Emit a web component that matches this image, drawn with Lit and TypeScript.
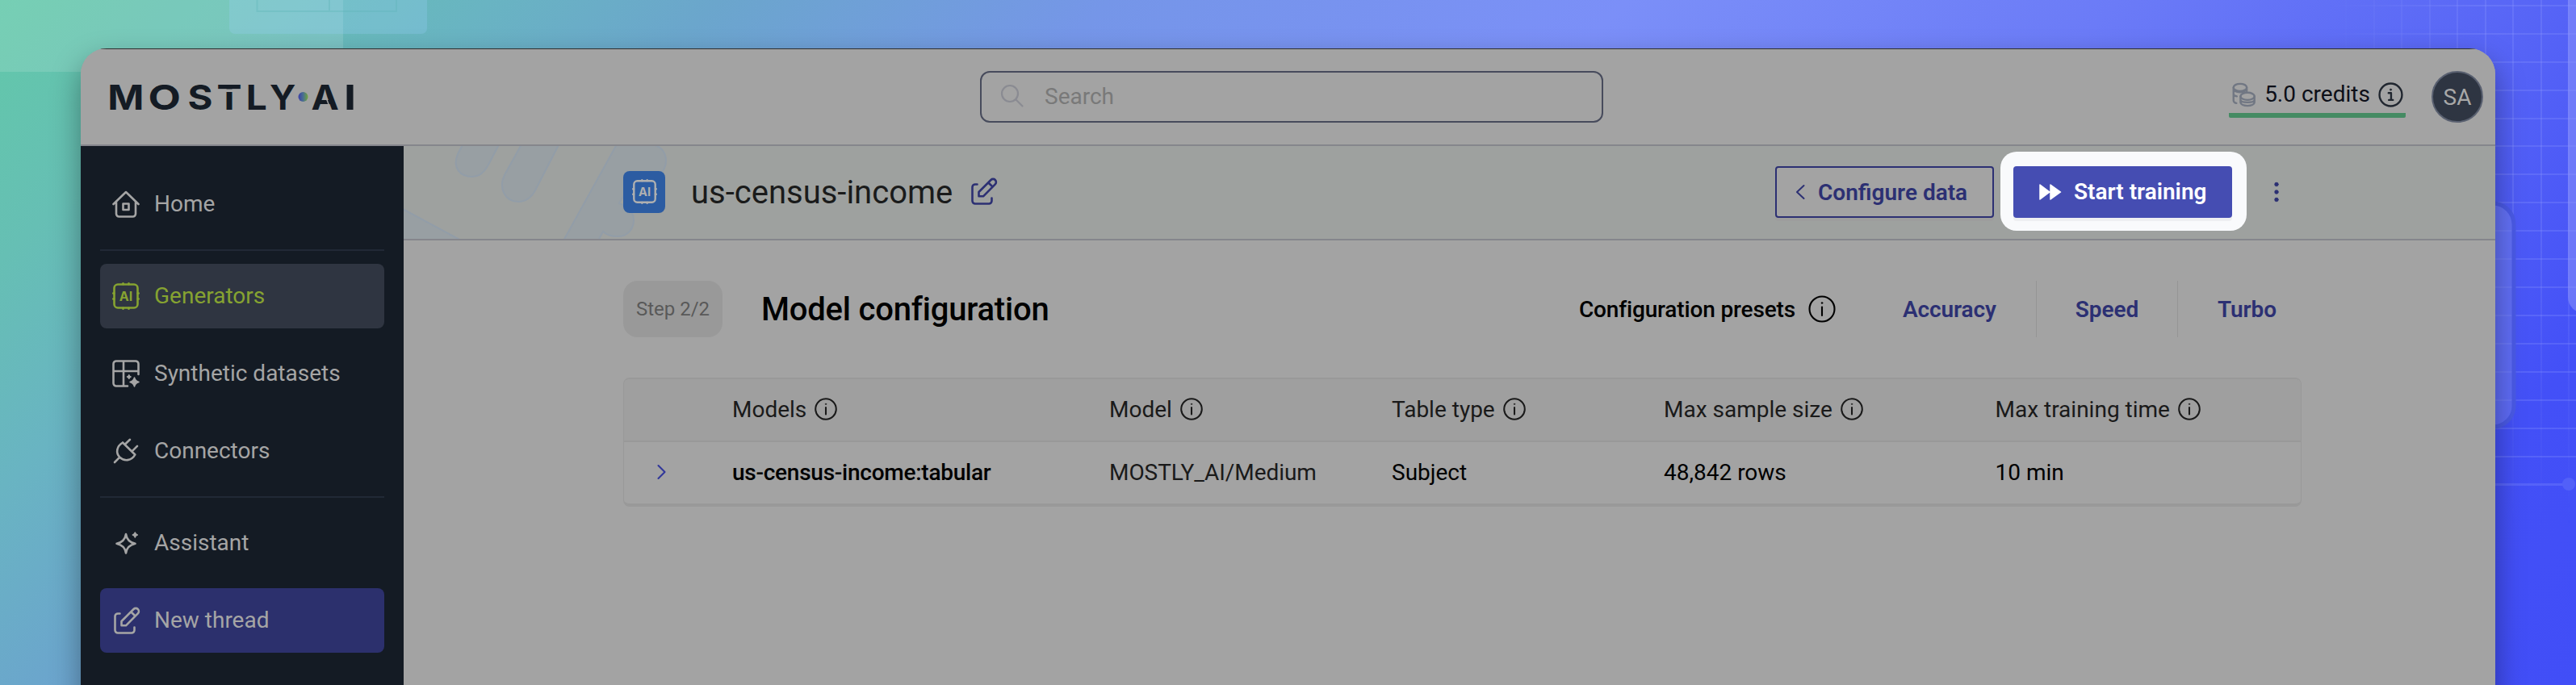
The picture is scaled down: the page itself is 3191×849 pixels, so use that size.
import { LitElement, html, css, svg } from "lit";
import { customElement, property } from "lit/decorators.js";

const icons: Record<string, any> = {
  home: svg`<path d="M1.5 17 17 2l15.500 15M5 14.500V29a3.500 3.500 0 0 0 3.500 3.500h17A3.500 3.500 0 0 0 29 29V14.500"/><rect x="13.500" y="16.500" width="7" height="7.500"/>`,
  chip: svg`<rect x="2.500" y="2.500" width="29" height="29" rx="4.500"/><path d="M13.500 1.300v1M20.500 1.300v1M13.500 31.700v1M20.500 31.700v1M1.300 13.500h1M1.300 20.500h1M31.700 13.500h1M31.700 20.500h1"/><text x="17" y="23" text-anchor="middle" class="chiptext">AI</text>`,
  dataset: svg`<path d="M32.500 18V5A3.500 3.500 0 0 0 29 1.500H5A3.500 3.500 0 0 0 1.500 5v24A3.500 3.500 0 0 0 5 32.500h14M14 1.500v31M1.500 14h31"/><path class="solid" d="M27.500 22q1.200 4.300 5.500 5.500-4.300 1.200-5.500 5.500-1.200-4.300-5.500-5.500 4.300-1.200 5.500-5.500zM20.800 18.700q.5 2 2.300 2.300-1.800.5-2.300 2.300-.5-1.800-2.300-2.300 1.800-.5 2.300-2.300z"/>`,
  plug: svg`<path d="M13 6.500l15.300 15M22 2.800l-6.200 6M31 10.800l-6 6M13 6.500C5.500 11 4 19 9.300 24.700 14.500 30 24 29.500 28.300 21.500M3 31l6.300-6.300"/>`,
  spark: svg`<path d="M17 6c1 6.500 4.800 10.500 11.500 11.800C21.800 19.200 18 23 17 29.500 16 23 12.200 19.200 5.500 17.800 12.200 16.500 16 12.500 17 6z"/><path class="solid" d="M28.300 4q.6 2.400 3 3-2.400.6-3 3-.6-2.400-3-3 2.400-.6 3-3z"/>`,
  edit: svg`<path d="M9.500 8.500H7A3.500 3.500 0 0 0 3.500 12v17A3.500 3.500 0 0 0 7 32.500h17a3.500 3.500 0 0 0 3.500-3.500v-3.500M11.500 18 26.500 3a3.700 3.700 0 0 1 5.300 5.300L17 23.300h-5.500zM23.500 6.500l5 5"/>`,
  search: svg`<circle cx="13" cy="13" r="10"/><path d="M20.500 20.500l8 8"/>`,
  coins: svg`<ellipse cx="12" cy="7" rx="9" ry="5"/><path d="M3 7v18c0 1.500 2 3 4 3.300M21 7v5M3 16c0 1.500 2 2.700 4.500 3M5 12c4 2 10 2 14-.5"/><ellipse cx="22" cy="19" rx="9.500" ry="5"/><path d="M12.500 19v8c0 6.500 19 6.500 19 0v-8M12.500 23.500c0 5 19 5 19 0"/>`,
  info: svg`<circle cx="17" cy="17" r="15.500"/><path d="M17 14.500V25"/><circle class="solid dot" cx="17" cy="9.500" r="1"/>`,
  infoSerif: svg`<circle cx="17" cy="17" r="15.300"/><path d="M14 14.500h3.500V24M14.500 24h5.500"/><circle class="solid dot" cx="17" cy="10" r="1.300"/>`,
  left: svg`<path d="M21.500 9l-8.500 8 8.500 8"/>`,
  right: svg`<path d="M12.500 9l8 8-8 8"/>`,
  forward: svg`<path class="solid" d="M4 8l12 9L4 26zM17 8l12.500 9L17 26z"/>`,
  kebab: svg`<circle class="solid dot" cx="17" cy="7.500" r="2.400"/><circle class="solid dot" cx="17" cy="17" r="2.400"/><circle class="solid dot" cx="17" cy="26.500" r="2.400"/>`,
};

@customElement("ui-icon")
class UiIcon extends LitElement {
  @property() name = "home";
  static styles = css`
    :host { display: block; flex: none; width: 34px; height: 34px; }
    svg { display: block; width: 100%; height: 100%; overflow: visible; fill: none; stroke: currentColor; stroke-width: var(--stroke, 2.6); stroke-linecap: round; stroke-linejoin: round; }
    .solid { fill: currentColor; stroke-width: 1.5; }
    .dot { stroke-width: 0.5; }
    .chiptext { font: 700 16px Inter, sans-serif; fill: currentColor; stroke: none; }
  `;
  render() {
    return html`<svg viewBox="0 0 34 34">${icons[this.name]}</svg>`;
  }
}

@customElement("app-backdrop")
class AppBackdrop extends LitElement {
  static styles = css`
    :host { position: absolute; inset: 0; background: linear-gradient(135deg, #62c8a9 0%, #66bfb4 8%, #69b4c2 15%, #6ba6cc 22%, #7596e8 34%, #7b8ff8 50%, #6b7bf7 65%, #5765f6 78%, #4350f7 90%, #414ef7 100%); }
    svg { display: block; width: 3191px; height: 849px; }
  `;
  render() {
    const xs = [2906, 2941, 2975, 3010, 3044, 3079, 3113, 3148, 3182];
    const ys = [7, 42, 77, 112, 147, 181, 216, 251, 286, 321, 356, 391, 426, 461, 496, 531, 566];
    return html`<svg viewBox="0 0 3191 849">
      <defs>
        <linearGradient id="fx" x1="0" x2="1"><stop offset="0" stop-color="#000" /><stop offset="0.6" stop-color="#fff" /></linearGradient>
        <linearGradient id="fy" x1="0" x2="0" y1="0" y2="1"><stop offset="0" stop-color="#fff" /><stop offset="0.4" stop-color="#fff" /><stop offset="1" stop-color="#fff" stop-opacity="0" /></linearGradient>
        <mask id="m" maskUnits="userSpaceOnUse" x="2880" y="0" width="311" height="849"><rect x="2880" y="0" width="311" height="849" fill="url(#fx)" /></mask>
        <mask id="n" maskUnits="userSpaceOnUse" x="2880" y="0" width="311" height="660"><rect x="2880" y="0" width="311" height="650" fill="url(#fy)" /></mask>
      </defs>
      <rect width="425" height="89" fill="#fff" fill-opacity=".13" />
      <rect x="284" y="-20" width="245" height="62" rx="7" fill="#9fd0ff" fill-opacity=".24" />
      <path d="M318.500 0V14H491V0M408 0V14" fill="none" stroke="#5fb5b8" stroke-opacity=".35" stroke-width="2" />
      <g mask="url(#m)" stroke="#8f9bff" stroke-opacity=".25" stroke-width="2">
        <g mask="url(#n)">${xs.map((x) => svg`<path d="M${x} 0V650" />`)}</g>
        ${ys.map((y) => svg`<path d="M2880 ${y}H3191" />`)}
        <path d="M2880 600.500H3182" stroke-width="3" />
      </g>
      <circle cx="3182" cy="600" r="8" fill="#5260f8" />
      <rect x="3181" y="-20" width="60" height="408" rx="20" fill="#8a94fb" fill-opacity=".55" />
      <rect x="3040" y="252" width="74" height="277" rx="26" fill="#7886f5" fill-opacity=".5" stroke="#4a5ae6" stroke-width="5" />
    </svg>`;
  }
}

// letter, ink left edge, horizontal stretch, left side bearing
const wordmark: [string, number, number, number][] = [
  ["M", 0, 1.127, 2.5],
  ["O", 50, 1.22, 2],
  ["S", 98, 1.1, 1.3],
  ["T", 134, 1.08, 1.5],
  ["L", 172, 1.07, 3],
  ["Y", 199, 1.03, 1],
  ["A", 251, 1.07, 1.5],
  ["I", 294, 1.25, 3.2],
];

@customElement("app-topbar")
class AppTopbar extends LitElement {
  static styles = css`
    :host { display: flex; align-items: center; box-sizing: border-box; height: 121px; padding: 1px 15px 0 36px; border-bottom: 2px solid #85868c; background: linear-gradient(#303030, #303030) center top / calc(100% - 48px) 1px no-repeat #a3a3a3; border-radius: 32px 32px 0 0; }
    .logo { display: block; width: 304px; height: 34px; overflow: visible; fill: #141b24; font: 700 43px Inter, sans-serif; }
    .search { display: flex; align-items: center; box-sizing: border-box; width: 772px; height: 64px; margin-left: 774px; padding-left: 22px; border: 2px solid #474b5c; border-radius: 12px; color: #797979; font-size: 28px; gap: 22px; }
    .search span { padding-bottom: 2px; }
    .search ui-icon { color: #8a8b92; --stroke: 2.2; }
    .credits { margin-left: auto; margin-right: 32px; display: flex; align-items: center; box-sizing: border-box; width: 219px; height: 52px; padding: 0 3px; border-bottom: 6px solid #458b63; border-radius: 2px; color: #0d0f18; font-size: 28px; justify-content: space-between; }
    .credits span { padding-bottom: 2px; }
    .credits ui-icon { width: 31px; height: 31px; color: #20262f; }
    .credits .coins { color: #717783; }
    .avatar { display: flex; align-items: center; justify-content: center; box-sizing: border-box; width: 64px; height: 64px; border: 2px solid #596070; border-radius: 50%; background: #2e3542; color: #a8a8a8; font-size: 28px; }
  `;
  render() {
    return html`
      <svg class="logo" viewBox="0 0 304 34">
        <defs><linearGradient id="dot"><stop offset="0" stop-color="#3b3fa8" /><stop offset="0.5" stop-color="#4a6f90" /><stop offset="1" stop-color="#6fa53c" /></linearGradient></defs>
        ${wordmark.map(([ch, x, sx, lsb]) => svg`<text transform="translate(${x} 32.500) scale(${sx} 1)" x=${-lsb}>${ch}</text>`)}
        <rect x="133" y="7.500" width="30" height="3.500" fill="#a3a3a3" />
        <path d="M268.300 19l4 10.500" stroke="#a3a3a3" stroke-width="1.500" />
        <circle cx="239.500" cy="17" r="6" fill="url(#dot)" />
      </svg>
      <div class="search"><ui-icon name="search"></ui-icon><span>Search</span></div>
      <div class="credits"><ui-icon class="coins" name="coins"></ui-icon><span>5.0 credits</span><ui-icon name="infoSerif"></ui-icon></div>
      <div class="avatar">SA</div>
    `;
  }
}

const nav = [
  { icon: "home", label: "Home", kind: "" },
  null,
  { icon: "chip", label: "Generators", kind: "active" },
  { icon: "dataset", label: "Synthetic datasets", kind: "" },
  { icon: "plug", label: "Connectors", kind: "" },
  null,
  { icon: "spark", label: "Assistant", kind: "" },
  { icon: "edit", label: "New thread", kind: "primary" },
];

@customElement("app-sidebar")
class AppSidebar extends LitElement {
  static styles = css`
    :host { display: flex; flex-direction: column; gap: 16px; box-sizing: border-box; width: 400px; flex: none; padding: 32px 24px; background: #141b24; font-size: 28px; color: #a5a5a5; }
    .item { display: flex; align-items: center; gap: 18px; box-sizing: border-box; height: 80px; padding: 0 0 1px 15px; border-radius: 8px; }
    .line { height: 2px; background: #212936; }
    .active { background: #2f3541; color: #86a331; }
    .primary { background: #2c306d; }
  `;
  render() {
    return nav.map((n) => n
      ? html`<div class="item ${n.kind}"><ui-icon name=${n.icon}></ui-icon>${n.label}</div>`
      : html`<div class="line"></div>`);
  }
}

@customElement("app-titlebar")
class AppTitlebar extends LitElement {
  static styles = css`
    :host { position: relative; display: flex; align-items: center; box-sizing: border-box; height: 117px; padding: 0 0 0 272px; border-bottom: 2px solid #85868c; background: #9ea19f; color: #1a1b1b; }
    .art { position: absolute; left: 0; top: 0; width: 340px; height: 115px; fill: #989fa3; stroke: #929da8; stroke-width: 2; }
    .badge { position: relative; display: flex; align-items: center; justify-content: center; width: 52px; height: 52px; margin-right: 32px; margin-bottom: 2px; border-radius: 8px; background: #2c5ca2; color: #b0b0b0; }
    .badge ui-icon { width: 31px; height: 31px; }
    .title { font-size: 40px; margin-right: 21px; }
    .edit { color: #2c3073; margin-bottom: 3px; }
    .btn { display: flex; align-items: center; box-sizing: border-box; width: 271px; height: 64px; border-radius: 4px; font-size: 28px; font-weight: 600; }
    .outline { margin-left: auto; border: 2px solid #2c3073; background: #a3a3a3; color: #2c3073; padding-left: 12px; gap: 5px; box-shadow: 0 4px 0 #9d9d9d; }
    .outline ui-icon { --stroke: 2; }
    .spot { margin: 0 20px 4px 8px; padding: 18px 18px 16px 16px; border-radius: 20px; background: #f9fafc; }
    .solid { background: #454db2; color: #fff; padding-left: 29px; gap: 12px; box-shadow: 0 4px 0 #eeeff2; }
    .menu { margin-right: 254px; color: #2c3073; }
    .outline, .menu { margin-bottom: 1px; }
  `;
  render() {
    return html`
      <svg class="art" viewBox="500 181 340 115">
        <path d="M499 259 575 300H499z" />
        <path d="M578 170 567 191C560 208 570 219 585 219 594 219 600 213 604 206L623 170z" />
        <path d="M651 170 626 215C616 233 626 250 642 250 651 250 658 245 663 236L697 170z" />
        <path d="M769 170 697 300H740L747 287C752 292 759 293 766 293 777 293 785 284 785 273 785 262 779 256 767 252L776 236 818 216C829 204 827 186 812 180z" />
      </svg>
      <div class="badge"><ui-icon name="chip"></ui-icon></div>
      <div class="title">us-census-income</div>
      <ui-icon class="edit" name="edit"></ui-icon>
      <div class="btn outline"><ui-icon name="left"></ui-icon>Configure data</div>
      <div class="spot"><div class="btn solid"><ui-icon name="forward"></ui-icon>Start training</div></div>
      <ui-icon class="menu" name="kebab"></ui-icon>
    `;
  }
}

@customElement("model-config")
class ModelConfig extends LitElement {
  static styles = css`
    :host { display: block; padding: 48px 240px 0 272px; font-size: 28px; color: #000; }
    .head { display: flex; align-items: center; height: 74px; margin-bottom: 48px; padding-bottom: 0; }
    .step { display: flex; align-items: center; justify-content: center; width: 123px; height: 70px; margin-right: 48px; border-radius: 18px; background: #999; color: #595959; font-size: 24px; }
    h1 { margin: 0; font-size: 40px; font-weight: 500; letter-spacing: -0.2px; }
    .label { margin-left: auto; margin-right: 16px; font-weight: 500; letter-spacing: -0.15px; }
    .presets { display: flex; align-items: center; margin-left: 34px; color: #2c3073; font-weight: 600; letter-spacing: -0.1px; }
    .presets span { display: flex; align-items: center; height: 70px; padding: 0 49px; }
    .presets span:nth-child(2) { padding: 0 48px; }
    .presets span:last-child { padding-right: 31px; }
    .presets span + span { border-left: 1px solid #959595; }
    .table { border: 1px solid #999; border-top-width: 2px; border-bottom-width: 4px; border-radius: 8px; overflow: hidden; }
    .row { display: grid; grid-template-columns: 134px 467px 350px 337px 410.500px 1fr; align-items: center; box-sizing: content-box; height: 76px; }
    .row > div { display: flex; align-items: center; gap: 10px; padding-bottom: 2px; }
    .th { background: #9f9f9f; border-bottom: 2px solid #999; color: #1a1a1a; }
    .th ui-icon { width: 28px; height: 28px; }
    .row .chev { padding-left: 30px; color: #31379a; --stroke: 2; }
    .name { font-weight: 500; letter-spacing: -0.25px; }
    .model { color: #1a1a1a; letter-spacing: -0.05px; }
    ui-icon { --stroke: 2.1; }
    .th ui-icon { --stroke: 2.5; }
  `;
  render() {
    const heads = ["Models", "Model", "Table type", "Max sample size", "Max training time"];
    return html`
      <div class="head">
        <div class="step">Step 2/2</div>
        <h1>Model configuration</h1>
        <div class="label">Configuration presets</div>
        <ui-icon name="info"></ui-icon>
        <div class="presets"><span>Accuracy</span><span>Speed</span><span>Turbo</span></div>
      </div>
      <div class="table">
        <div class="row th"><div></div>${heads.map((h) => html`<div>${h}<ui-icon name="info"></ui-icon></div>`)}</div>
        <div class="row">
          <div class="chev"><ui-icon name="right"></ui-icon></div>
          <div class="name">us-census-income:tabular</div>
          <div class="model">MOSTLY_AI/Medium</div>
          <div>Subject</div>
          <div>48,842 rows</div>
          <div>10 min</div>
        </div>
      </div>
    `;
  }
}

@customElement("app-root")
class AppRoot extends LitElement {
  static styles = css`
    :host { display: block; position: relative; width: 3191px; height: 849px; overflow: hidden; font-family: Roboto, sans-serif; }
    .frame { display: flow-root; }
    .window { position: relative; width: 2991px; height: 830px; margin: 60px 0 0 100px; border-radius: 32px 32px 0 0; background: #a3a3a3; box-shadow: 0 16px 36px rgba(0, 0, 0, 0.36); display: flex; flex-direction: column; }
    .body { display: flex; flex: 1; }
    main { flex: 1; min-width: 0; }
  `;
  render() {
    return html`
      <app-backdrop></app-backdrop>
      <div class="frame">
        <div class="window">
          <app-topbar></app-topbar>
          <div class="body">
            <app-sidebar></app-sidebar>
            <main><app-titlebar></app-titlebar><model-config></model-config></main>
          </div>
        </div>
      </div>
    `;
  }
}
